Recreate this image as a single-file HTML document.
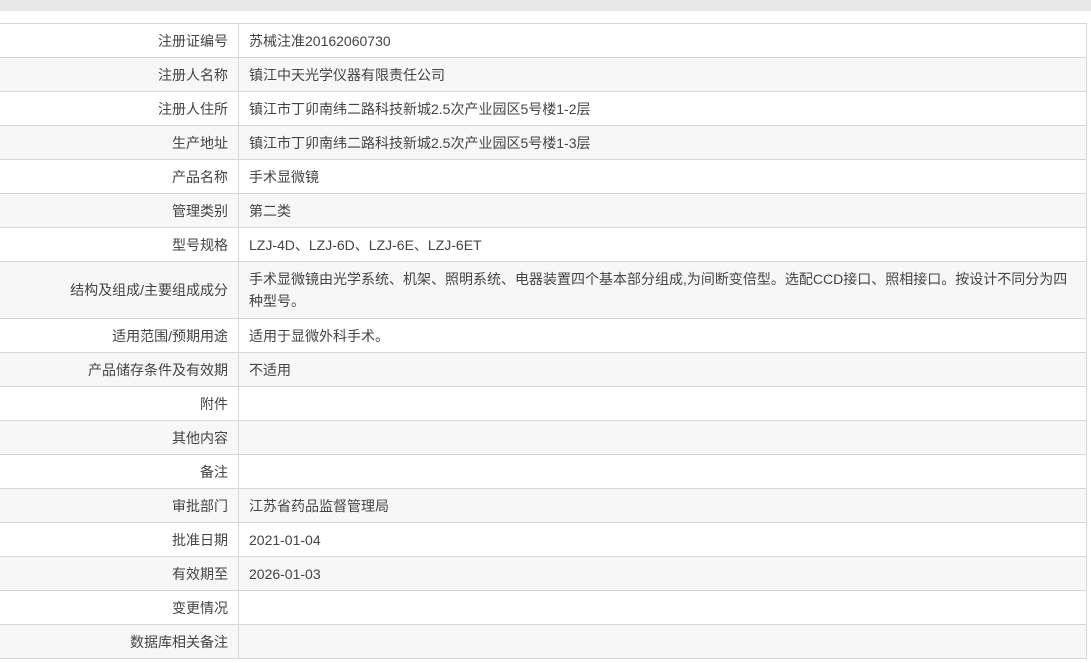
<!DOCTYPE html>
<html><head><meta charset="utf-8"><style>
html,body{margin:0;padding:0;width:1091px;height:663px;overflow:hidden;background:#fff;font-family:"Liberation Sans","Noto Sans CJK SC",sans-serif;font-size:14px;color:#444;}
.top{position:absolute;left:0;top:0;width:1091px;height:11px;background:#e8e8e8;}
table{position:absolute;left:-1px;top:23px;width:1088px;border-collapse:collapse;table-layout:fixed;}
td{border:1px solid #d7d7d7;height:34px;padding:0 10px;line-height:22px;box-sizing:border-box;}
td.l{width:239px;text-align:right;}
td.v{text-align:left;}
tr:nth-child(even) td{background:#f7f7f7;}
tr.tall td{height:57px;}
</style></head><body>
<div class="top"></div>
<table>
<tr><td class="l">注册证编号</td><td class="v">苏械注准20162060730</td></tr>
<tr><td class="l">注册人名称</td><td class="v">镇江中天光学仪器有限责任公司</td></tr>
<tr><td class="l">注册人住所</td><td class="v">镇江市丁卯南纬二路科技新城2.5次产业园区5号楼1-2层</td></tr>
<tr><td class="l">生产地址</td><td class="v">镇江市丁卯南纬二路科技新城2.5次产业园区5号楼1-3层</td></tr>
<tr><td class="l">产品名称</td><td class="v">手术显微镜</td></tr>
<tr><td class="l">管理类别</td><td class="v">第二类</td></tr>
<tr><td class="l">型号规格</td><td class="v">LZJ-4D、LZJ-6D、LZJ-6E、LZJ-6ET</td></tr>
<tr class="tall"><td class="l">结构及组成/主要组成成分</td><td class="v">手术显微镜由光学系统、机架、照明系统、电器装置四个基本部分组成,为间断变倍型。选配CCD接口、照相接口。按设计不同分为四<br>种型号。</td></tr>
<tr><td class="l">适用范围/预期用途</td><td class="v">适用于显微外科手术。</td></tr>
<tr><td class="l">产品储存条件及有效期</td><td class="v">不适用</td></tr>
<tr><td class="l">附件</td><td class="v"></td></tr>
<tr><td class="l">其他内容</td><td class="v"></td></tr>
<tr><td class="l">备注</td><td class="v"></td></tr>
<tr><td class="l">审批部门</td><td class="v">江苏省药品监督管理局</td></tr>
<tr><td class="l">批准日期</td><td class="v">2021-01-04</td></tr>
<tr><td class="l">有效期至</td><td class="v">2026-01-03</td></tr>
<tr><td class="l">变更情况</td><td class="v"></td></tr>
<tr><td class="l">数据库相关备注</td><td class="v"></td></tr>
</table>
</body></html>
